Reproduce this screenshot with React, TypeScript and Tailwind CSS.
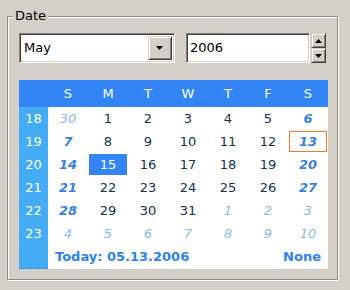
import { ChevronDown } from "lucide-react"

const days = ["S", "M", "T", "W", "T", "F", "S"]

type Cell = { d: number; other?: boolean }

const weeks: { no: number; cells: Cell[] }[] = [
  { no: 18, cells: [{ d: 30, other: true }, { d: 1 }, { d: 2 }, { d: 3 }, { d: 4 }, { d: 5 }, { d: 6 }] },
  { no: 19, cells: [{ d: 7 }, { d: 8 }, { d: 9 }, { d: 10 }, { d: 11 }, { d: 12 }, { d: 13 }] },
  { no: 20, cells: [{ d: 14 }, { d: 15 }, { d: 16 }, { d: 17 }, { d: 18 }, { d: 19 }, { d: 20 }] },
  { no: 21, cells: [{ d: 21 }, { d: 22 }, { d: 23 }, { d: 24 }, { d: 25 }, { d: 26 }, { d: 27 }] },
  { no: 22, cells: [{ d: 28 }, { d: 29 }, { d: 30 }, { d: 31 }, { d: 1, other: true }, { d: 2, other: true }, { d: 3, other: true }] },
  { no: 23, cells: [4, 5, 6, 7, 8, 9, 10].map((d) => ({ d, other: true })) },
]

const sunken =
  "border border-t-[#808080] border-l-[#808080] border-b-white border-r-white shadow-[inset_1px_1px_0_#404040,inset_-1px_-1px_0_#d4d0c8]"
const raised =
  "border border-t-[#d4d0c8] border-l-[#d4d0c8] border-b-[#404040] border-r-[#404040] shadow-[inset_1px_1px_0_#fff,inset_-1px_-1px_0_#808080] bg-[#d4d0c8]"

function Arrow({ up }: { up?: boolean }) {
  return (
    <svg width="7" height="4" viewBox="0 0 7 4" className={up ? "rotate-180" : ""}>
      <path d="M0 0h7L3.5 4z" fill="#000" />
    </svg>
  )
}

function DayCell({ cell, col, row }: { cell: Cell; col: number; row: number }) {
  const weekend = col === 0 || col === 6
  const selected = row === 2 && col === 1
  const today = row === 1 && col === 6
  let text = "text-[#12324f]"
  if (cell.other) text = "italic text-[#8cb8ee]"
  else if (weekend) text = "italic font-bold text-[#3a7fe0]"
  return (
    <div className="flex h-[23px] items-center justify-center p-[1px]">
      <div
        className={
          "flex h-full w-full items-center justify-center " +
          (selected ? "bg-[#3584f4] text-white " : today ? "border border-[#f07a2c] " : "") +
          (selected ? "" : text)
        }
      >
        {cell.d}
      </div>
    </div>
  )
}

export default function App() {
  return (
    <div className="h-[290px] w-[350px] bg-[#d4d0c8] pl-[7px] pt-[16px] text-[13px] text-black [font-family:'DejaVu_Sans',Tahoma,sans-serif]">
      {/* Group box */}
      <div className="relative h-[264px] w-[331px] border border-[#8e8c86] px-[11px] pt-[16px] shadow-[inset_1px_1px_0_#fff,1px_1px_0_#fff]">
        <span className="absolute -top-[9px] left-[5px] bg-[#d4d0c8] px-[2px] leading-[16px]">Date</span>

        <div className="flex items-start">
          {/* Month combo */}
          <div className={"flex h-[30px] w-[157px] items-center bg-white p-[2px] " + sunken}>
            <span className="flex-1 pl-[2px]">May</span>
            <div className={"flex h-full w-[24px] items-center justify-center " + raised}>
              <Arrow />
            </div>
          </div>
          {/* Year */}
          <div className={"ml-[11px] flex h-[30px] w-[125px] items-center bg-white pl-[3px] " + sunken}>2006</div>
          <div className="ml-[1px] flex h-[30px] w-[15px] flex-col">
            <div className={"flex flex-1 items-center justify-center " + raised}>
              <Arrow up />
            </div>
            <div className={"flex flex-1 items-center justify-center " + raised}>
              <Arrow />
            </div>
          </div>
        </div>

        {/* Calendar */}
        <div className="mt-[17px] flex h-[189px] w-[309px] bg-white">
          <div className="flex w-[29px] flex-col bg-[#44acf4] text-white">
            <div className="h-[27px] bg-[#3385f6]" />
            {weeks.map((w) => (
              <div key={w.no} className="flex h-[23px] items-center justify-center">
                {w.no}
              </div>
            ))}
            <div className="flex-1 border-b border-dotted border-[#2a7fd6]" />
          </div>
          <div className="flex flex-1 flex-col">
            <div className="grid h-[27px] grid-cols-7 bg-[#3385f6] text-white">
              {days.map((d, i) => (
                <div key={i} className="flex items-center justify-center">
                  {d}
                </div>
              ))}
            </div>
            {weeks.map((w, r) => (
              <div key={w.no} className="grid grid-cols-7">
                {w.cells.map((c, i) => (
                  <DayCell key={i} cell={c} col={i} row={r} />
                ))}
              </div>
            ))}
            <div className="flex flex-1 items-center justify-between pl-[7px] pr-[7px] font-bold text-[#2f80f0]">
              <span>Today: 05.13.2006</span>
              <span>None</span>
            </div>
          </div>
        </div>
      </div>
    </div>
  )
}
